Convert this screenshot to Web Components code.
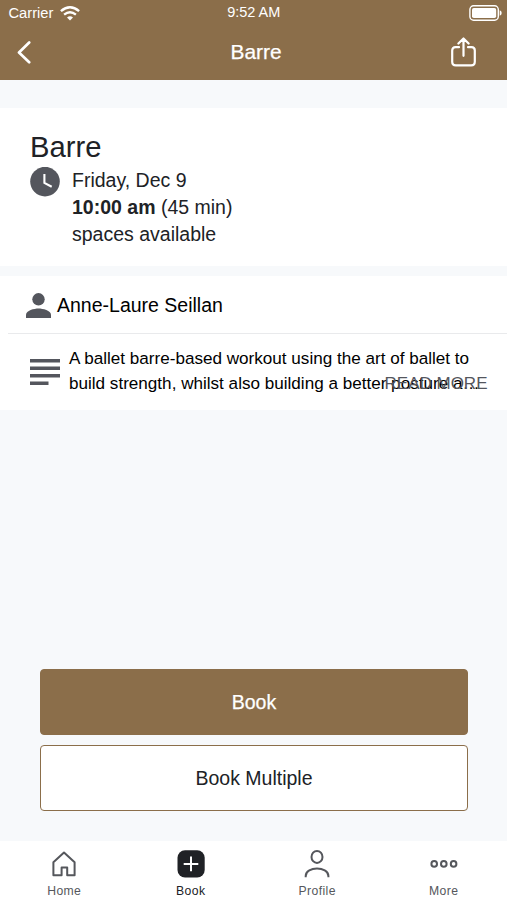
<!DOCTYPE html>
<html lang="en"><head><meta charset="utf-8"><title>Barre</title>
<style>
html,body{margin:0;height:100%}
body{font-family:"Liberation Sans",Arial,sans-serif;color:#202226;background:#f7f9fb}
</style></head><body>
<class-screen></class-screen>
<script>
function define(name, html){
  const t=document.createElement('template');
  t.innerHTML='<style>*{box-sizing:border-box}svg{display:block;flex:none}</style>'+html;
  customElements.define(name, class extends HTMLElement{
    constructor(){super();this.attachShadow({mode:'open'}).append(t.content.cloneNode(true));}
  });
}
define('status-bar',`<style>
:host{display:grid;grid-template-columns:1fr auto 1fr;align-items:center;height:25px;padding:0 5px 0 8.5px;color:#fff;font-size:14.7px;line-height:24px}
.l{display:flex;align-items:center;gap:7px}.r{justify-self:end;padding-top:1px}.l svg{margin-top:1px}
.t{transform:translate(-1.5px,-1px);font-size:14.5px}
</style><div class="l"><span>Carrier</span>
<svg width="20" height="15" viewBox="0 0 20 15" fill="none" stroke="#fff" stroke-width="2.4"><path d="M.9 5.1Q10-2.6 19.1 5.1M4.1 8.6Q10 3.7 15.9 8.6"/><path d="M10 14.6 7 11.4Q10 8.9 13 11.4Z" fill="#fff" stroke="none"/></svg></div>
<span class="t">9:52 AM</span>
<div class="r"><svg width="33" height="16" viewBox="0 0 33 16"><rect x=".9" y=".8" width="28.4" height="14.4" rx="3.7" fill="none" stroke="#fff" stroke-width="1.4"/><rect x="3" y="3" width="24.2" height="10" rx="1.8" fill="#fff"/><path d="M30.7 5.2q2 .7 2 2.8t-2 2.8z" fill="#fff"/></svg></div>`);
define('nav-bar',`<style>
:host{display:grid;grid-template-columns:1fr auto 1fr;align-items:center;height:55px;padding:0 30px 0 16px;color:#fff}
h1{margin:0;font-size:20.9px;font-weight:400;line-height:24px;transform:translate(9.5px,-1px);-webkit-text-stroke:.25px}
.s{justify-self:end}
</style><svg width="16" height="24" viewBox="0 0 16 24" fill="none" stroke="#fff" stroke-width="2.7" stroke-linecap="round" stroke-linejoin="round"><path d="M13.2 1.500 3 11.500l10.200 9.800"/></svg>
<h1><slot></slot></h1>
<svg class="s" width="27" height="31" viewBox="0 0 27 31" fill="none" stroke="#fff" stroke-width="2.2" stroke-linecap="round" stroke-linejoin="round"><path d="M9 10.200H5.600Q2.200 10.200 2.200 13.600v11.200q0 3.600 3.600 3.600h15.400q3.600 0 3.600-3.600V13.600q0-3.400-3.400-3.400H18M13.500 18.800V2.200M8.400 6.500l5.100-5 5.100 5"/></svg>`);
define('class-summary',`<style>
:host{display:block;height:158px;background:#fff;padding:24px 30px 0}
h2{margin:0;font-size:29.2px;font-weight:400;line-height:31px}
.row{display:flex;gap:12px;padding-top:4px;font-size:19.5px;line-height:27px}
</style><h2><slot name="title"></slot></h2>
<div class="row"><svg width="30" height="30" viewBox="0 0 30 30"><circle cx="15" cy="14.600" r="14.800" fill="#54565d"/><path d="M14.400 7v8.900l7.300 3.800" fill="none" stroke="#fff" stroke-width="2.1"/></svg>
<div><slot></slot></div></div>`);
define('instructor-row',`<style>
:host{display:flex;align-items:center;gap:6px;height:57px;padding:1px 0 0 26px;color:#000;font-size:19.5px;background:#fff}
span{line-height:26px}
</style><svg width="25" height="25" viewBox="0 0 25 25" fill="#54565d"><circle cx="12.500" cy="6.300" r="6.200"/><path d="M0 25v-3.200c0-4.300 8.200-6.300 12.500-6.300S25 17.500 25 21.800V25z"/></svg><span><slot></slot></span>`);
define('class-description',`<style>
:host{display:block;background:#fff;padding-left:8px}
.in{position:relative;display:flex;gap:9px;height:77px;border-top:1px solid #e9eaec;padding:13px 0 0 22px;color:#000;font-size:17.1px;line-height:24.5px}
.in svg{margin-top:12px}p{margin:0;white-space:nowrap}
a{position:absolute;right:19.5px;top:38px;color:#54565d;font-size:17px}
</style><div class="in"><svg width="30" height="27" viewBox="0 0 30 27" fill="#54565d"><path d="M0 0h30v3.600H0zM0 7.500h30v3.600H0zM0 15h30v3.600H0zM0 22.500h18.500v3.600H0z"/></svg><p><slot></slot></p><a>READ MORE</a></div>`);
define('action-button',`<style>
:host{display:flex;align-items:center;justify-content:center;height:66px;border:1.4px solid #8b6e4a;border-radius:4px;background:#fff;font-size:19.5px;line-height:24px}
:host([primary]){background:#8b6e4a;color:#fff;-webkit-text-stroke:.25px}
</style><slot></slot>`);
define('tab-item',`<style>
:host{display:flex;flex-direction:column;align-items:center;gap:4px;padding-top:8px;color:#55575c;font-size:12.2px;line-height:16px;letter-spacing:.4px}
:host([active]){color:#202226}
</style><slot name="icon"></slot><span><slot></slot></span>`);
define('tab-bar',`<style>
:host{display:grid;grid-template-columns:repeat(4,1fr);height:59px;background:#fff;padding-left:1px}
svg{fill:none;stroke:#55575c;stroke-width:2}
</style>
<tab-item><svg slot="icon" width="30" height="30" viewBox="0 0 30 30"><path d="M4.400 26.300V13.200L15 3.500l10.600 9.700v13.100h-7.400v-7.700h-5.600v7.700z" stroke-linejoin="round"/></svg>Home</tab-item>
<tab-item active><svg slot="icon" width="30" height="30" viewBox="0 0 30 30"><rect x="1.500" y="1.200" width="27.200" height="27.200" rx="7.500" fill="#202226" stroke="none"/><path d="M15 7.600v14.600M7.700 14.900h14.600" stroke="#fff"/></svg>Book</tab-item>
<tab-item><svg slot="icon" width="30" height="30" viewBox="0 0 30 30"><ellipse cx="15" cy="7.900" rx="5.500" ry="6"/><path d="M3.700 28.300v-1.400C3.700 22 9.500 19.600 15 19.600s11.400 2.400 11.400 7.300v1.400"/></svg>Profile</tab-item>
<tab-item><svg slot="icon" width="30" height="30" viewBox="0 0 30 30"><circle cx="5.200" cy="14.900" r="2.800"/><circle cx="14.800" cy="14.900" r="2.800"/><circle cx="24.600" cy="14.900" r="2.800"/></svg>More</tab-item>`);
define('class-screen',`<style>
:host{display:flex;flex-direction:column;height:100vh;overflow:hidden}
header{background:#8b6e4a;height:80px;margin-bottom:28px;flex:none}
section{margin-top:10px}
.actions{margin-top:auto;display:grid;gap:9.500px;padding:0 39px 30.200px 40px}
</style>
<header><status-bar></status-bar><nav-bar>Barre</nav-bar></header>
<class-summary><span slot="title">Barre</span>Friday, Dec 9<br><b>10:00 am</b> (45 min)<br>spaces available</class-summary>
<section><instructor-row>Anne-Laure Seillan</instructor-row>
<class-description>A ballet barre-based workout using the art of ballet to<br>build strength, whilst also building a better posture a…</class-description></section>
<div class="actions"><action-button primary>Book</action-button><action-button>Book Multiple</action-button></div>
<tab-bar></tab-bar>`);
</script></body></html>
